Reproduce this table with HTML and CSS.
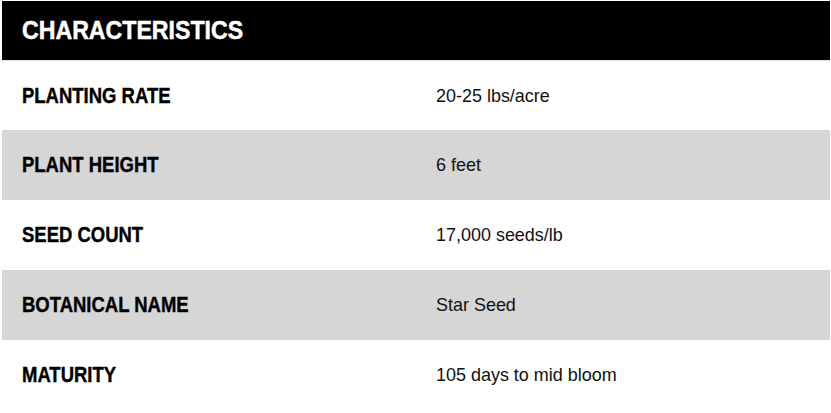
FILE: index.html
```html
<!DOCTYPE html>
<html>
<head>
<meta charset="utf-8">
<link rel="stylesheet" href="styles.css">
</head>
<body>
<div class="card">
  <div class="card-header"><span class="narrow">CHARACTERISTICS</span></div>
  <div class="row first">
    <div class="label"><span class="narrow">PLANTING RATE</span></div>
    <div class="value"><span class="narrow">20-25 lbs/acre</span></div>
  </div>
  <div class="row alt">
    <div class="label"><span class="narrow">PLANT HEIGHT</span></div>
    <div class="value"><span class="narrow">6 feet</span></div>
  </div>
  <div class="row">
    <div class="label"><span class="narrow">SEED COUNT</span></div>
    <div class="value"><span class="narrow">17,000 seeds/lb</span></div>
  </div>
  <div class="row alt">
    <div class="label"><span class="narrow">BOTANICAL NAME</span></div>
    <div class="value"><span class="narrow">Star Seed</span></div>
  </div>
  <div class="row">
    <div class="label"><span class="narrow">MATURITY</span></div>
    <div class="value"><span class="narrow">105 days to mid bloom</span></div>
  </div>
</div>
</body>
</html>
```

FILE: styles.css
```css
html, body {
  background: #fff;
}
body {
  margin: 1px 1px 0 2px;
  font-family: "Liberation Sans", Arial, sans-serif;
  color: #000;
}
.card {
  display: flex;
  flex-direction: column;
}
.narrow {
  display: inline-block;
  white-space: nowrap;
  transform-origin: left center;
}
.card-header {
  height: 59px;
  background: #000;
  color: #fff;
  font-weight: bold;
  font-size: 26px;
  display: flex;
  align-items: center;
  padding-left: 20px;
  border-bottom: 1px solid #e6e6e6;
}
.card-header .narrow {
  transform: scaleX(0.89);
  -webkit-text-stroke: 0.5px #fff;
}
.row {
  height: 70px;
  display: grid;
  grid-template-columns: 434px 1fr;
  align-items: center;
}
.row.first {
  height: 69px;
}
.row.alt {
  background: #d6d6d6;
}
.label {
  padding-left: 20px;
  font-weight: bold;
  font-size: 22px;
}
.label .narrow {
  transform: scaleX(0.84);
  -webkit-text-stroke: 0.4px #000;
}
.value {
  font-size: 19px;
  color: #111;
}
.value .narrow {
  transform: scaleX(0.945);
}
```
